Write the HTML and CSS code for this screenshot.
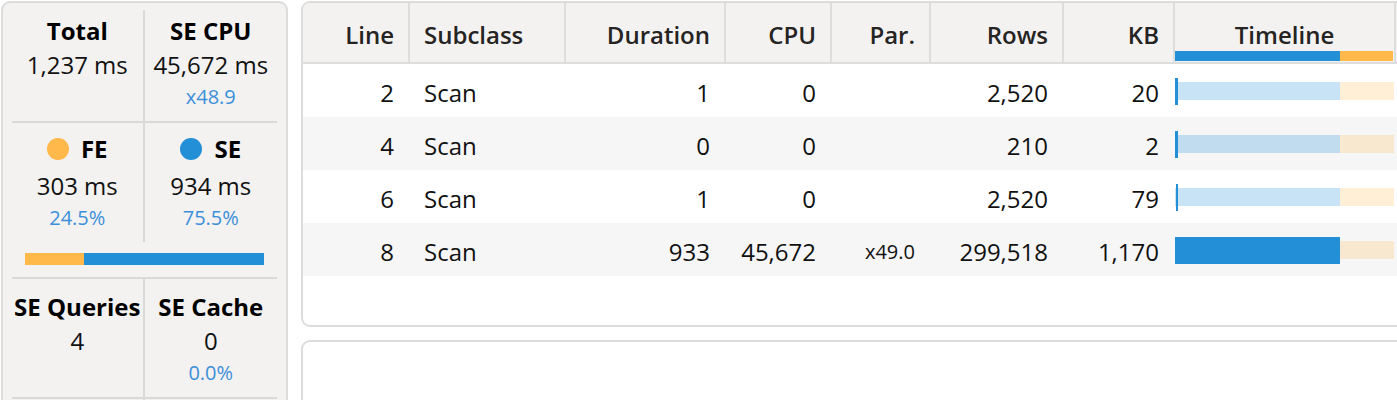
FILE: index.html
```html
<!DOCTYPE html>
<html lang="en">
<head>
<meta charset="utf-8">
<title>Server Timings</title>
<link rel="stylesheet" href="styles.css">
</head>
<body>
<div class="page">
  <aside class="stats">
    <section class="stat-block">
      <div class="stat-grid">
        <div class="stat">
          <div class="stat-title">Total</div>
          <div class="stat-value">1,237 ms</div>
          <div class="stat-sub"></div>
        </div>
        <div class="stat">
          <div class="stat-title">SE CPU</div>
          <div class="stat-value">45,672 ms</div>
          <div class="stat-sub">x48.9</div>
        </div>
      </div>
    </section>
    <section class="stat-block stat-block-split">
      <div class="stat-grid">
        <div class="stat stat-split">
          <div class="stat-title stat-title-dot"><span class="dot dot-fe"></span>FE</div>
          <div class="stat-value">303 ms</div>
          <div class="stat-sub">24.5%</div>
        </div>
        <div class="stat stat-split">
          <div class="stat-title stat-title-dot"><span class="dot dot-se"></span>SE</div>
          <div class="stat-value">934 ms</div>
          <div class="stat-sub">75.5%</div>
        </div>
      </div>
      <div class="split-bar">
        <div class="split-fe" style="width:24.5%"></div>
        <div class="split-se"></div>
      </div>
    </section>
    <section class="stat-block stat-block-last">
      <div class="stat-grid">
        <div class="stat stat-low">
          <div class="stat-title">SE Queries</div>
          <div class="stat-value">4</div>
          <div class="stat-sub"></div>
        </div>
        <div class="stat stat-low">
          <div class="stat-title">SE Cache</div>
          <div class="stat-value">0</div>
          <div class="stat-sub">0.0%</div>
        </div>
      </div>
    </section>
    <section class="stat-block stat-block-more">
      <div class="stat-grid">
        <div class="stat"></div>
        <div class="stat"></div>
      </div>
    </section>
  </aside>

  <main class="main">
    <div class="panel table-panel">
      <div class="thead">
        <div class="th num">Line</div>
        <div class="th">Subclass</div>
        <div class="th num">Duration</div>
        <div class="th num">CPU</div>
        <div class="th num">Par.</div>
        <div class="th num">Rows</div>
        <div class="th num">KB</div>
        <div class="th th-timeline">
          <div class="th-timeline-label">Timeline</div>
          <div class="timeline-head-bar">
            <div class="head-se" style="width:75.5%"></div>
            <div class="head-fe"></div>
          </div>
        </div>
        <div class="th th-fill"></div>
      </div>

      <div class="trow">
        <div class="td num">2</div>
        <div class="td">Scan</div>
        <div class="td num">1</div>
        <div class="td num">0</div>
        <div class="td num"></div>
        <div class="td num">2,520</div>
        <div class="td num">20</div>
        <div class="td td-timeline">
          <div class="track">
            <div class="track-se" style="width:75.5%"></div>
            <div class="track-fe"></div>
            <div class="seg" style="left:0;width:3px"></div>
          </div>
        </div>
        <div class="td"></div>
      </div>

      <div class="trow alt">
        <div class="td num">4</div>
        <div class="td">Scan</div>
        <div class="td num">0</div>
        <div class="td num">0</div>
        <div class="td num"></div>
        <div class="td num">210</div>
        <div class="td num">2</div>
        <div class="td td-timeline">
          <div class="track">
            <div class="track-se" style="width:75.5%"></div>
            <div class="track-fe"></div>
            <div class="seg" style="left:0;width:3px"></div>
          </div>
        </div>
        <div class="td"></div>
      </div>

      <div class="trow">
        <div class="td num">6</div>
        <div class="td">Scan</div>
        <div class="td num">1</div>
        <div class="td num">0</div>
        <div class="td num"></div>
        <div class="td num">2,520</div>
        <div class="td num">79</div>
        <div class="td td-timeline">
          <div class="track">
            <div class="track-se" style="width:75.5%"></div>
            <div class="track-fe"></div>
            <div class="seg" style="left:1px;width:2px"></div>
          </div>
        </div>
        <div class="td"></div>
      </div>

      <div class="trow alt">
        <div class="td num">8</div>
        <div class="td">Scan</div>
        <div class="td num">933</div>
        <div class="td num">45,672</div>
        <div class="td num small">x49.0</div>
        <div class="td num">299,518</div>
        <div class="td num">1,170</div>
        <div class="td td-timeline">
          <div class="track">
            <div class="track-se" style="width:75.5%"></div>
            <div class="track-fe"></div>
            <div class="seg" style="left:0;width:75.5%"></div>
          </div>
        </div>
        <div class="td"></div>
      </div>
    </div>

    <div class="panel query-panel"></div>
  </main>
</div>
</body>
</html>
```

FILE: styles.css
```css
* {
  box-sizing: border-box;
}

html,
body {
  margin: 0;
}

body {
  width: 1397px;
  height: 400px;
  overflow: hidden;
  background: #ffffff;
  font-family: "Open Sans", "Noto Sans", sans-serif;
  color: #111111;
}

.page {
  display: flex;
  align-items: flex-start;
  gap: 13px;
  padding: 1px 0 0 1px;
}

/* ---------- left stats panel ---------- */

.stats {
  flex: 0 0 287px;
  height: 470px;
  background: #f3f2f1;
  border: 2px solid #dcdcdc;
  border-radius: 9px;
  padding: 7px 9px 0;
}

.stat-block {
  border-bottom: 2px solid #d9d9d9;
}

.stat-grid {
  display: grid;
  grid-template-columns: 1fr 1fr;
}

.stat {
  text-align: center;
  padding: 3px 0 10px;
}

.stat:first-child {
  border-right: 2px solid #d9d9d9;
}

.stat-split {
  padding-top: 8px;
}

.stat-low {
  padding-top: 10px;
}

.stat-title {
  font-size: 24px;
  font-weight: 700;
  line-height: 36px;
  height: 36px;
  color: #000000;
  white-space: nowrap;
}

.stat-title-dot {
  display: flex;
  justify-content: center;
  align-items: center;
  gap: 12px;
  margin-bottom: 3px;
}

.dot {
  width: 22px;
  height: 22px;
  border-radius: 50%;
}

.dot-fe {
  background: #ffb84a;
}

.dot-se {
  background: #228fd6;
}

.stat-value {
  font-size: 24px;
  line-height: 32px;
  height: 32px;
  color: #111111;
  white-space: nowrap;
}

.stat-sub {
  font-size: 20px;
  line-height: 30px;
  height: 30px;
  padding-top: 1px;
  color: #3b8fd9;
}

.split-bar {
  display: flex;
  height: 12px;
  margin: 11px 13px 12px;
}

.split-fe {
  background: #ffb84a;
}

.split-se {
  flex: 1;
  background: #228fd6;
}

.stat-block-more .stat {
  height: 80px;
}

/* ---------- right side ---------- */

.main {
  flex: 0 0 1160px;
  display: flex;
  flex-direction: column;
  gap: 13px;
}

.panel {
  background: #ffffff;
  border: 2px solid #dcdcdc;
  border-radius: 9px;
  overflow: hidden;
}

.table-panel {
  height: 326px;
}

.query-panel {
  height: 120px;
}

.thead,
.trow {
  display: grid;
  grid-template-columns: 107px 156px 160px 106px 99px 133px 111px 221px 1fr;
}

.thead {
  background: #f3f2f1;
  border-bottom: 2px solid #dddddd;
  height: 61px;
}

.th {
  font-size: 24px;
  font-weight: 600;
  line-height: 32px;
  color: #252423;
  padding: 16px 14px 0;
  border-right: 2px solid #dddddd;
  white-space: nowrap;
}

.th-fill {
  border-right: none;
}

.num {
  text-align: right;
}

.th-timeline {
  display: flex;
  flex-direction: column;
  padding: 16px 0 0;
  text-align: center;
}

.timeline-head-bar {
  display: flex;
  height: 10px;
  margin-right: 1px;
}

.head-se {
  background: #228fd6;
}

.head-fe {
  flex: 1;
  background: #ffb84a;
}

.trow {
  height: 53px;
  background: #ffffff;
}

.trow.alt {
  background: #f6f6f6;
}

.td {
  font-size: 24px;
  line-height: 49px;
  padding: 4px 14px 0;
  border-right: 2px solid transparent;
  color: #111111;
  white-space: nowrap;
}

.td.small {
  font-size: 20px;
}

.td-timeline {
  padding: 0;
  display: flex;
  align-items: center;
}

.track {
  position: relative;
  flex: 1;
  height: 27px;
  display: flex;
  align-items: center;
  margin-top: 1px;
}

.track-se {
  height: 18px;
  background: rgba(34, 143, 214, 0.25);
}

.track-fe {
  flex: 1;
  height: 18px;
  background: rgba(255, 184, 74, 0.22);
}

.seg {
  position: absolute;
  top: 0;
  height: 27px;
  background: #228fd6;
}
```
